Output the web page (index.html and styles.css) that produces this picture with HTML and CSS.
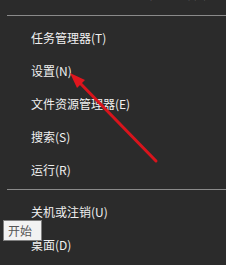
FILE: index.html
```html
<!DOCTYPE html>
<html>
<head>
  <title>Win+X Menu</title>
  <link rel="stylesheet" href="styles.css">
</head>
<body>
  <div class="menu">
    <div class="item item-cut">Windows PowerShell(管理员)(A)</div>
    <div class="separator"></div>
    <div class="item">任务管理器(T)</div>
    <div class="item">设置(N)</div>
    <div class="item">文件资源管理器(E)</div>
    <div class="item">搜索(S)</div>
    <div class="item">运行(R)</div>
    <div class="separator"></div>
    <div class="item">关机或注销(U)</div>
    <div class="item">桌面(D)</div>
  </div>

  <div class="tooltip">开始</div>

  <svg class="arrow" width="226" height="265" viewBox="0 0 226 265">
    <line x1="156" y1="161" x2="79" y2="82" stroke="#d8141c" stroke-width="3" stroke-linecap="round"/>
    <polygon points="70,73 85,80 77,88" fill="#e0161e"/>
  </svg>
</body>
</html>
```

FILE: styles.css
```css
html, body {
  margin: 0;
  padding: 0;
}

body {
  width: 226px;
  height: 265px;
  overflow: hidden;
  background-color: #2b2b2b;
  font-family: "Noto Sans CJK SC", "Liberation Sans", sans-serif;
  font-size: 12px;
  color: #f0f0f0;
  position: relative;
}

.menu {
  display: flex;
  flex-direction: column;
}

.item {
  height: 33px;
  line-height: 33px;
  padding-left: 31px;
  white-space: nowrap;
}

/* row above the visible area, only its bottom edge peeks in */
.item-cut {
  margin-top: -21px;
  line-height: 28px;
}

.separator {
  height: 1px;
  margin: 3px 0 5px 7px;
  background-color: #8a8a8a;
}

/* tooltip over the menu */
.tooltip {
  position: absolute;
  left: 3px;
  top: 220px;
  width: 33px;
  height: 19px;
  line-height: 19px;
  padding-left: 4px;
  background-color: #f2f2f2;
  border: 1px solid #808080;
  color: #555555;
  font-size: 12px;
}

.arrow {
  position: absolute;
  left: 0;
  top: 0;
}
```
